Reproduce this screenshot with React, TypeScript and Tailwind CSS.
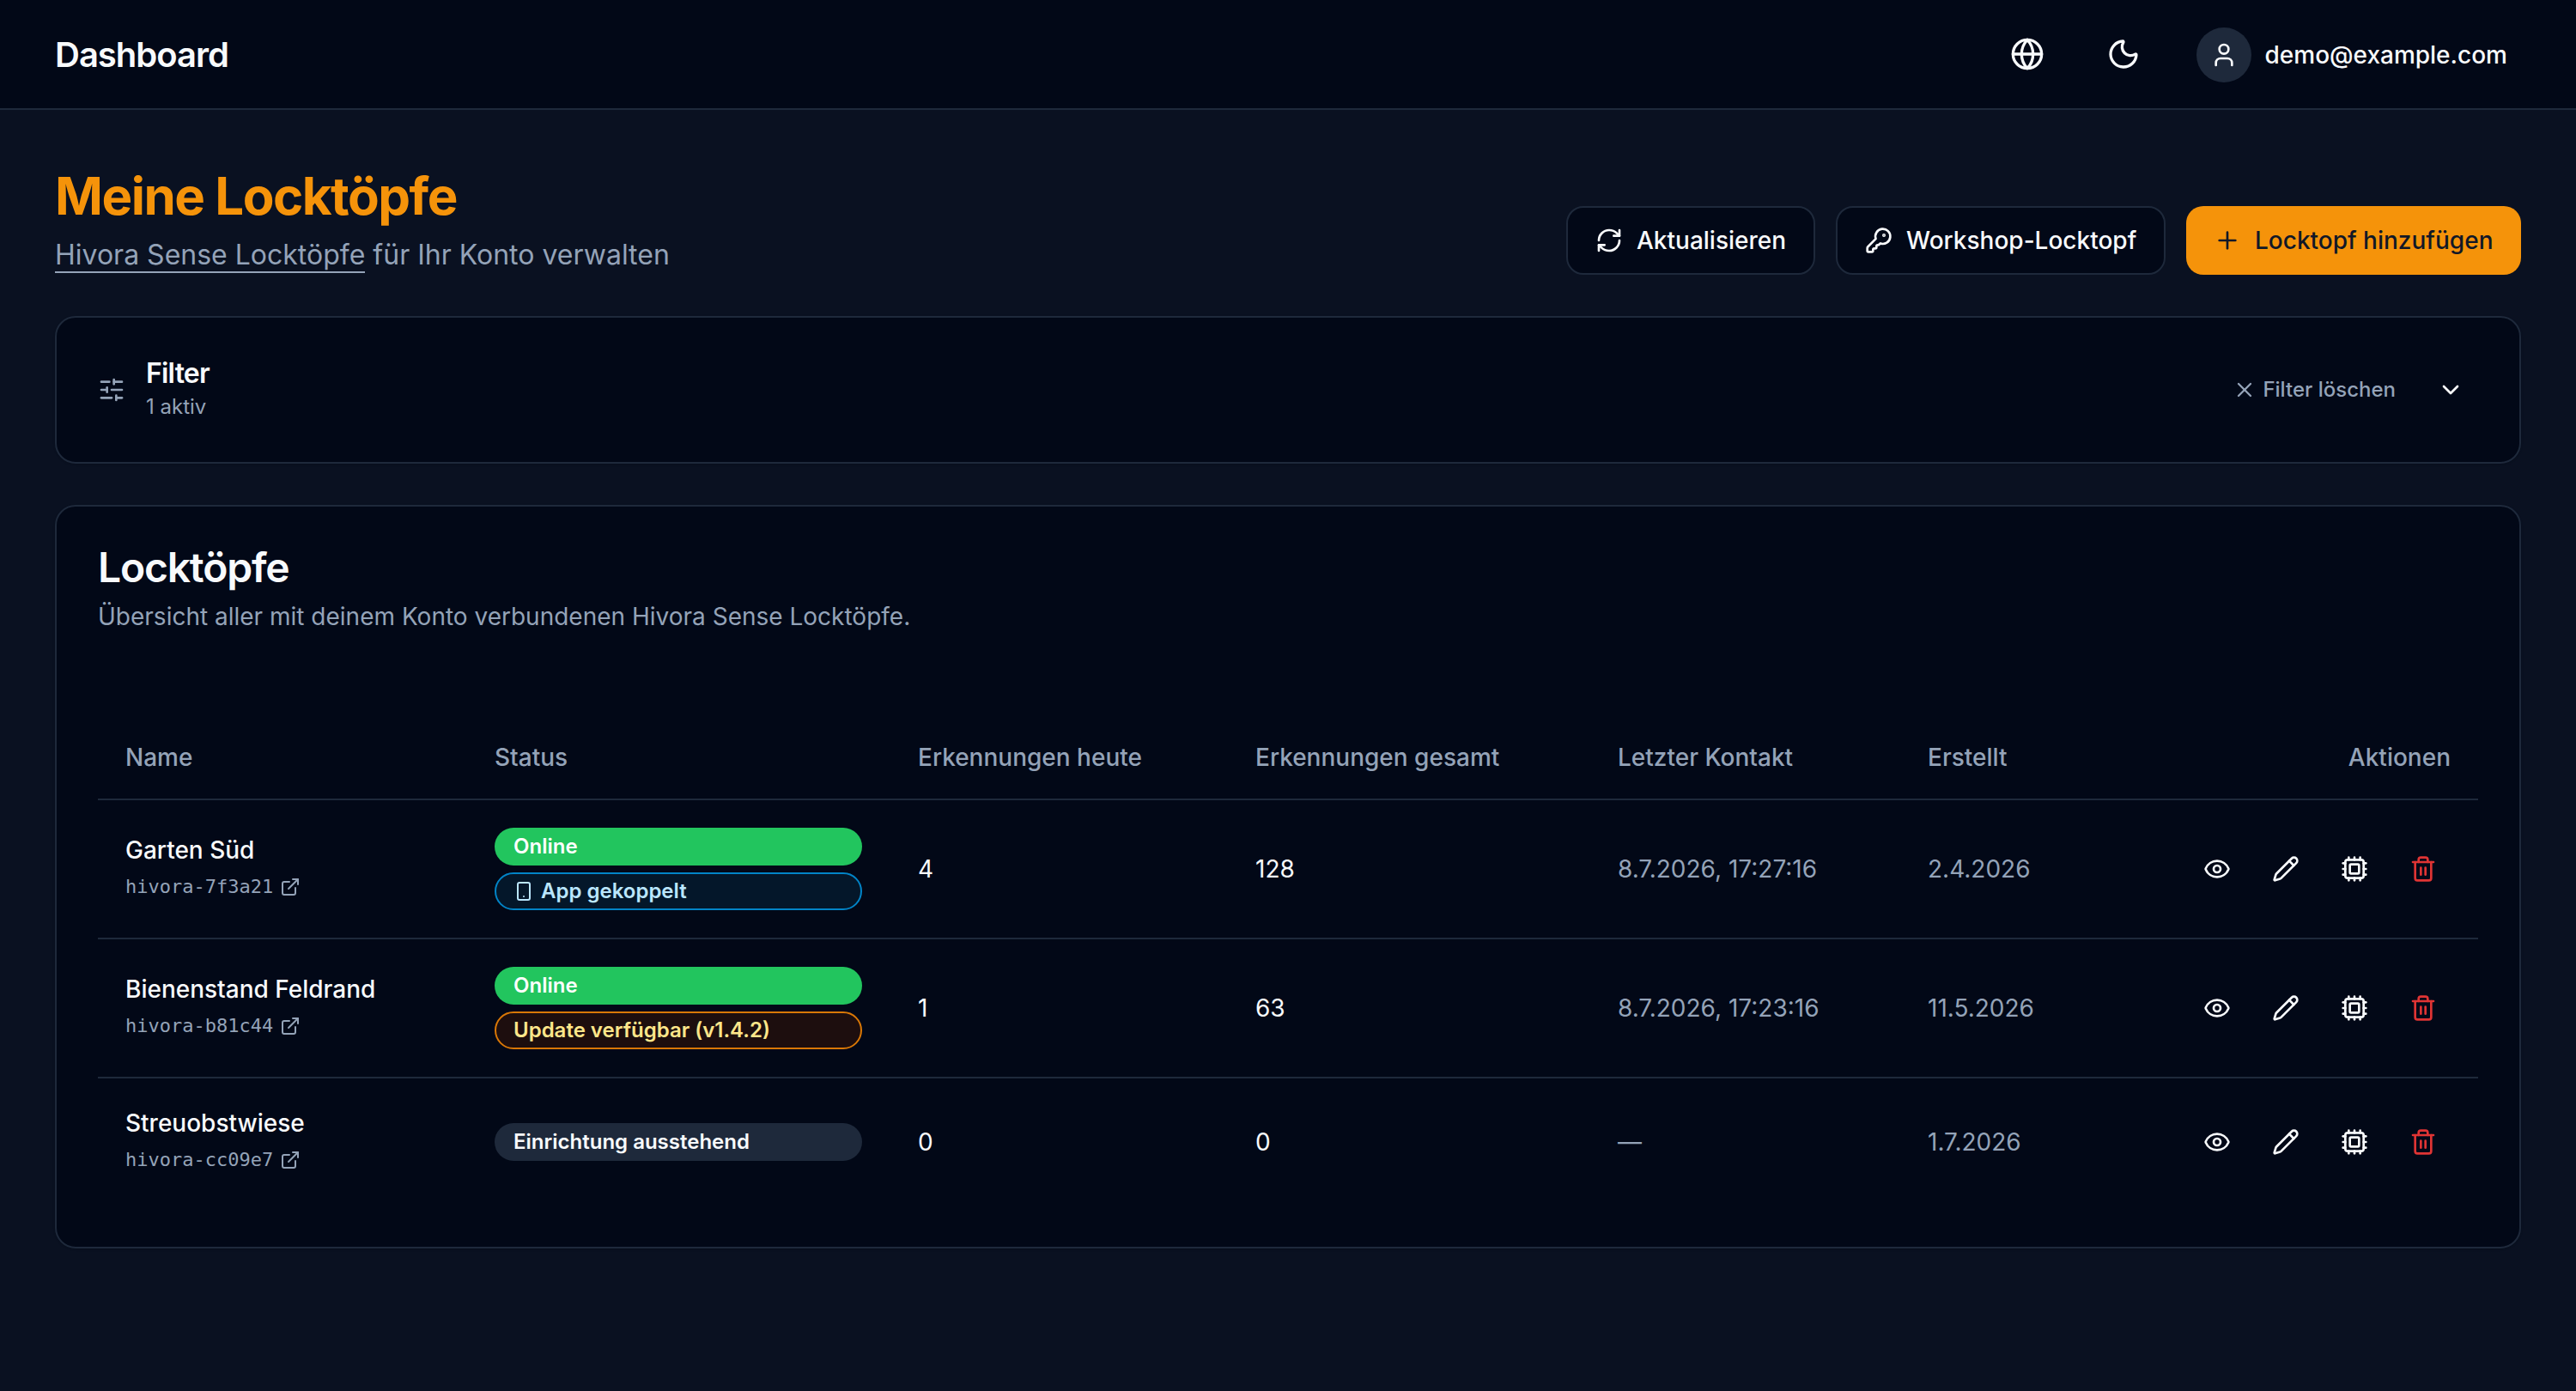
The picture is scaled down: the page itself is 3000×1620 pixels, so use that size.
import React from 'react';
import {
    ChevronDown,
    Cpu,
    ExternalLink,
    Eye,
    Globe,
    KeyRound,
    Moon,
    Pencil,
    Plus,
    RefreshCw,
    SlidersHorizontal,
    Smartphone,
    Trash2,
    User,
    X,
} from 'lucide-react';
import { clsx } from 'clsx';

type BadgeKind = 'online' | 'paired' | 'update' | 'pending';

interface Badge {
    kind: BadgeKind;
    label: string;
}

interface Device {
    id: string;
    name: string;
    badges: Badge[];
    today: number;
    total: number;
    lastContact: string;
    created: string;
}

const devices: Device[] = [
    {
        id: 'hivora-7f3a21',
        name: 'Garten Süd',
        badges: [
            { kind: 'online', label: 'Online' },
            { kind: 'paired', label: 'App gekoppelt' },
        ],
        today: 4,
        total: 128,
        lastContact: '8.7.2026, 17:27:16',
        created: '2.4.2026',
    },
    {
        id: 'hivora-b81c44',
        name: 'Bienenstand Feldrand',
        badges: [
            { kind: 'online', label: 'Online' },
            { kind: 'update', label: 'Update verfügbar (v1.4.2)' },
        ],
        today: 1,
        total: 63,
        lastContact: '8.7.2026, 17:23:16',
        created: '11.5.2026',
    },
    {
        id: 'hivora-cc09e7',
        name: 'Streuobstwiese',
        badges: [{ kind: 'pending', label: 'Einrichtung ausstehend' }],
        today: 0,
        total: 0,
        lastContact: '—',
        created: '1.7.2026',
    },
];

const badgeStyles: Record<BadgeKind, string> = {
    online: 'border-transparent bg-[#22c55e] bg-origin-border text-white',
    paired: 'border-[#0284c7] bg-[#082f49]/40 text-[#bae6fd]',
    update: 'border-[#d97706] bg-[#451a03]/40 text-[#fde68a]',
    pending: 'border-transparent bg-[#1e293b] text-[#f8fafc]',
};

const StatusBadge: React.FC<{ badge: Badge }> = ({ badge }) => (
    <div
        className={clsx(
            'flex h-11 items-center gap-2 rounded-full border-2 px-5 text-[24px] leading-8 font-semibold',
            badgeStyles[badge.kind],
        )}
    >
        {badge.kind === 'paired' && <Smartphone className="size-6" />}
        {badge.label}
    </div>
);

const ActionButton: React.FC<{ label: string; children: React.ReactNode }> = ({ label, children }) => (
    <button aria-label={label} className="flex size-16 items-center justify-center">
        {children}
    </button>
);

const Header: React.FC = () => (
    <header className="flex h-32 items-center justify-between border-b-2 border-[#1e293b] bg-[#020817] px-16">
        <div className="pt-0.5 text-[40px] leading-14 font-semibold tracking-tight">Dashboard</div>
        <div className="flex items-center gap-8">
            <button aria-label="Sprache" className="flex size-20 items-center justify-center">
                <Globe className="size-10" />
            </button>
            <button aria-label="Design" className="flex size-20 items-center justify-center">
                <Moon className="size-10" />
            </button>
            <button className="flex h-20 items-center gap-4 pt-0.5 pr-4 pl-[13px]">
                <span className="flex size-16 items-center justify-center rounded-full bg-[#1e293b]">
                    <User className="size-8" />
                </span>
                <span className="text-[28px] leading-10 font-medium">demo@example.com</span>
            </button>
        </div>
    </header>
);

const PageHeading: React.FC = () => (
    <div className="flex items-end justify-between">
        <div>
            <h1 className="text-[60px] leading-[72px] font-bold tracking-tight text-[#f5930a]">Meine Locktöpfe</h1>
            <p className="mt-2.5 text-[32px] leading-[46px] text-[#94a3b8]">
                <span className="border-b-2 border-[#94a3b8]">Hivora Sense Locktöpfe</span> für Ihr Konto verwalten
            </p>
        </div>
        <div className="flex gap-6 text-[28px] leading-10 font-medium">
            <button className="flex h-20 w-[290px] items-center gap-4 rounded-[20px] border-2 border-[#1e293b] bg-[#020817] pl-8 whitespace-nowrap">
                <RefreshCw className="size-8" />
                Aktualisieren
            </button>
            <button className="flex h-20 w-96 items-center gap-4 rounded-[20px] border-2 border-[#1e293b] bg-[#020817] pl-8 whitespace-nowrap">
                <KeyRound className="size-8" />
                Workshop-Locktopf
            </button>
            <button className="flex h-20 w-[390px] items-center gap-4 rounded-[20px] bg-[#f5930a] pl-8 whitespace-nowrap text-[#111827]">
                <Plus className="size-8" />
                Locktopf hinzufügen
            </button>
        </div>
    </div>
);

const FilterCard: React.FC = () => (
    <section className="flex h-[172px] items-center justify-between rounded-3xl border-2 border-[#1e293b] bg-[#020817] px-12 shadow-sm">
        <div className="flex items-center gap-6">
            <SlidersHorizontal className="size-8 text-[#94a3b8]" />
            <div>
                <h3 className="text-[32px] leading-[34px] font-semibold tracking-tight">Filter</h3>
                <p className="mt-1.5 text-[24px] leading-8 text-[#94a3b8]">1 aktiv</p>
            </div>
        </div>
        <div className="flex items-center gap-4">
            <button className="flex h-16 items-center gap-[7px] px-4 text-[24px] leading-8 font-medium text-[#94a3b8]">
                <X className="size-7" />
                Filter löschen
            </button>
            <ActionButton label="Filter öffnen">
                <ChevronDown className="size-8" />
            </ActionButton>
        </div>
    </section>
);

const DeviceRow: React.FC<{ device: Device }> = ({ device }) => (
    <tr className="*:border-[#1e293b] not-last:*:border-b-2">
        <td className="p-8 align-middle">
            <div className="leading-10 font-medium">{device.name}</div>
            <div className="flex h-11 items-center gap-2 pt-0.5 font-['DejaVu_Sans_Mono',monospace] text-[22px] text-[#94a3b8]">
                {device.id}
                <ExternalLink className="size-6" />
            </div>
        </td>
        <td className="py-8 pr-[33px] pl-8 align-middle">
            <div className="flex flex-col gap-2">
                {device.badges.map(badge => (
                    <StatusBadge key={badge.kind} badge={badge} />
                ))}
            </div>
        </td>
        <td className="p-8 align-middle">{device.today}</td>
        <td className="p-8 align-middle">{device.total}</td>
        <td className="p-8 align-middle text-[#94a3b8]">{device.lastContact}</td>
        <td className="p-8 align-middle text-[#94a3b8]">{device.created}</td>
        <td className="px-8 align-middle">
            <div className="flex justify-end gap-4">
                <ActionButton label="Anzeigen">
                    <Eye className="size-8" />
                </ActionButton>
                <ActionButton label="Bearbeiten">
                    <Pencil className="size-8" />
                </ActionButton>
                <ActionButton label="Firmware">
                    <Cpu className="size-8" />
                </ActionButton>
                <ActionButton label="Löschen">
                    <Trash2 className="size-8 text-[#e03434]" />
                </ActionButton>
            </div>
        </td>
    </tr>
);

const DeviceTable: React.FC = () => (
    <section className="rounded-3xl border-2 border-[#1e293b] bg-[#020817] p-12 shadow-sm">
        <h2 className="text-[48px] leading-[46px] font-semibold tracking-tight">Locktöpfe</h2>
        <p className="mt-3.5 text-[28px] leading-10 text-[#94a3b8]">
            Übersicht aller mit deinem Konto verbundenen Hivora Sense Locktöpfe.
        </p>
        <table className="mt-24 w-full table-fixed border-separate border-spacing-0 text-[28px] leading-10">
            <colgroup>
                <col className="w-[430px]" />
                <col className="w-[493px]" />
                <col className="w-[393px]" />
                <col className="w-[422px]" />
                <col className="w-[361px]" />
                <col className="w-[260px]" />
                <col />
            </colgroup>
            <thead>
                <tr className="h-[98px] text-left text-[#94a3b8] *:border-b-2 *:border-[#1e293b]">
                    <th className="px-8 font-medium">Name</th>
                    <th className="px-8 font-medium">Status</th>
                    <th className="px-8 font-medium">Erkennungen heute</th>
                    <th className="px-8 font-medium">Erkennungen gesamt</th>
                    <th className="px-8 font-medium">Letzter Kontakt</th>
                    <th className="px-8 font-medium">Erstellt</th>
                    <th className="px-8 text-right font-medium">Aktionen</th>
                </tr>
            </thead>
            <tbody>
                {devices.map(device => (
                    <DeviceRow key={device.id} device={device} />
                ))}
            </tbody>
        </table>
    </section>
);

export default function App() {
    return (
        <div className="min-h-screen bg-[#0a1121] font-['Inter',sans-serif] text-[#f8fafc] antialiased">
            <Header />
            <main className="flex flex-col gap-12 px-16 pt-16">
                <PageHeading />
                <FilterCard />
                <DeviceTable />
            </main>
        </div>
    );
}
